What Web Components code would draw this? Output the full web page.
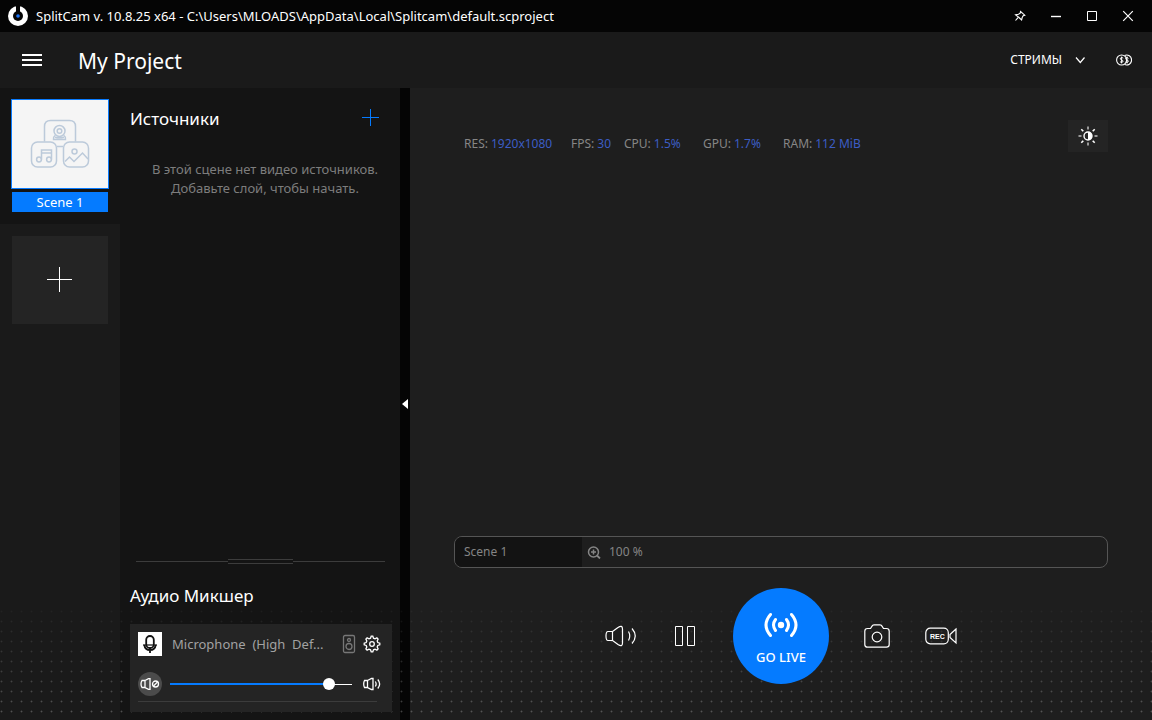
<!DOCTYPE html>
<html lang="ru">
<head>
<meta charset="utf-8">
<title>SplitCam</title>
<style>
html, body { margin: 0; height: 100%; background: #1e1e1e; }
body { font-family: "Noto Sans", "Open Sans", sans-serif; font-size: 13px; color: #fff; }
</style>
</head>
<body>
<split-app></split-app>
<script>
const BASE = `
*, *::before, *::after { box-sizing: border-box; }
button { font: inherit; color: inherit; background: none; border: 0; padding: 0; margin: 0; cursor: pointer; display: flex; align-items: center; justify-content: center; }
h1, h2, p { margin: 0; font-weight: 400; }
svg { display: block; flex: none; fill: none; stroke: currentColor; }
`;
function define(name, css, html) {
  const template = document.createElement('template');
  template.innerHTML = `<style>${BASE}${css}</style>${html}`;
  customElements.define(name, class extends HTMLElement {
    constructor() {
      super();
      this.attachShadow({ mode: 'open' }).append(template.content.cloneNode(true));
    }
  });
}

define('title-bar', `
:host { display: flex; align-items: center; height: 32px; padding: 0 6px 0 8px; background: #050505; }
h1 { flex: 1; margin-left: 8px; font-size: 13px; line-height: 20px; white-space: nowrap; }
button { width: 36px; height: 32px; }
`, `
<svg width="20" height="20" viewBox="0 0 20 20" stroke="none" style="stroke:none" aria-hidden="true"><circle cx="10" cy="10" r="10" fill="#fff"/><path d="M8 0h4v8h-4z" fill="#050505"/><circle cx="10" cy="10" r="5" fill="#050505"/><circle cx="10" cy="10" r="1.800" fill="#1d74f5"/></svg>
<h1><slot></slot></h1>
<button aria-label="Закрепить"><svg width="12" height="12" viewBox="0 0 12 12" stroke-width="1.1"><path d="M6.500 1.500L10.800 5.200L9.200 5.800L8.200 7.500L7.600 10L5 7.500L1.600 4.800L4.500 4.300L6.200 3.200ZM4 7.600L1.500 10.500"/></svg></button>
<button aria-label="Свернуть"><svg width="12" height="12" viewBox="0 0 12 12"><path d="M1 6.5h10" stroke-width="1.4"/></svg></button>
<button aria-label="Развернуть"><svg width="12" height="12" viewBox="0 0 12 12"><path d="M1.500 1.500h9v9h-9z"/></svg></button>
<button aria-label="Закрыть"><svg width="12" height="12" viewBox="0 0 12 12"><path d="M1.200 1.200l9.600 9.600M10.800 1.200l-9.600 9.600" stroke-width="1.2"/></svg></button>
`);

define('project-bar', `
:host { display: flex; align-items: center; height: 56px; padding: 0 20px 0 22px; background: #1a1a1a; }
h2 { flex: 1; margin-left: 36px; padding-top: 2px; font-size: 21px; line-height: 28px; }
.streams { gap: 12px; font-size: 12px; line-height: 16px; margin-right: 30px; }
`, `
<button aria-label="Меню"><svg width="20" height="14" viewBox="0 0 20 14" stroke-width="2"><path d="M0 2h20M0 7h20M0 12h20"/></svg></button>
<h2><slot></slot></h2>
<button class="streams">СТРИМЫ<svg width="12" height="12" viewBox="0 0 12 12" stroke-width="1.2"><path d="M2 3.500l4.300 5l4.200-5"/></svg></button>
<button aria-label="Донаты"><svg width="16" height="12" viewBox="0 0 16 12" stroke-width="1.1"><circle cx="5.600" cy="6" r="5"/><path d="M8.600 1.400A5 5 0 1 1 8.600 10.600"/><path d="M7.200 4.200C6.400 3.200 4.200 3.400 4.300 4.800C4.400 6.200 7 5.600 7 7.200C7 8.600 4.800 8.700 4 7.600M5.600 2.600v6.800M12.400 4.400C11.800 3.300 9.600 3.400 9.700 4.800C9.800 6.200 12.300 5.600 12.300 7.200C12.300 8.500 10.600 8.700 9.800 7.900M11 2.600v6.800" stroke-width="1"/></svg></button>
`);

define('scene-list', `
:host { display: block; }
.current { padding: 11px 11px 12px; background: #141414; }
.thumb { width: 100%; height: 90px; background: #f5f5f5; border: 1px solid #0a7cff; color: #bccada; }
.name { margin: 3px 1px 0; height: 20px; background: #057bff; text-align: center; font-size: 13px; line-height: 20px; }
.add { margin: 12px 12px 0; width: calc(100% - 24px); height: 88px; background: #242424; }
`, `
<div class="current">
<button class="thumb" aria-label="Scene 1"><svg width="60" height="50" viewBox="0 0 60 50" stroke-width="1.5"><path d="M14.500 22.500V7.500Q14.500 1.500 20.500 1.500H39.500Q45.500 1.500 45.500 7.500V22.500M27 27.500H33"/><rect x="1.500" y="23" width="25" height="25" rx="6"/><rect x="33.500" y="23" width="25" height="25" rx="6"/><circle cx="29.500" cy="12" r="5.500"/><circle cx="29.500" cy="12" r="2.300"/><path d="M25 16.500Q23 18 23.500 20.500H35.500Q36 18 34 16.500M25 18.200Q29.500 19.500 34 18.200"/><circle cx="9" cy="40.500" r="2.400"/><circle cx="19" cy="40.500" r="2.400"/><path d="M11.500 40.500V31H21.500V40.500M11.500 34H21.500"/><circle cx="44.500" cy="32.500" r="2.500"/><path d="M35 42.500L39.500 38L44 42.500L52.500 34L58 40"/></svg></button>
<div class="name">Scene 1</div>
</div>
<button class="add" aria-label="Добавить сцену"><svg width="26" height="26" viewBox="0 0 26 26"><path d="M12.500 0v25M0 12.500h25" stroke-width="1"/></svg></button>
`);

define('source-list', `
:host { display: block; flex: 1; padding: 16px 10px 0; }
header { display: flex; align-items: center; justify-content: space-between; height: 28px; padding-right: 11px; }
h2 { padding-top: 2px; font-size: 17px; line-height: 28px; }
.plus path { stroke: #057bff; }
p { margin: 28px 0 0; padding-left: 10px; text-align: center; font-size: 13px; line-height: 19px; color: #7d7d7d; }
`, `
<header><h2>Источники</h2><button class="plus" aria-label="Добавить источник"><svg width="18" height="18" viewBox="0 0 18 18"><path d="M9.500 0v17M1 8.500h17"/></svg></button></header>
<p>В этой сцене нет видео источников.<br>Добавьте слой, чтобы начать.</p>
`);

define('audio-mixer', `
:host { display: block; padding: 0 8px 8px 10px; }
.grip { display: flex; align-items: center; height: 5px; margin: 0 7px 0 6px; }
.grip::before, .grip::after { content: ""; flex: 1; height: 1px; background: #3c3c3c; }
.grip i { width: 65px; height: 5px; border: solid #3c3c3c; border-width: 1px 0; }
h2 { margin: 18px 0 14px; font-size: 17px; line-height: 28px; }
.card { background: #242424; height: 88px; padding: 8px; }
.row { display: flex; align-items: center; height: 24px; }
.row.level { margin-top: 16px; }
.mic { width: 24px; height: 24px; background: #fff; color: #111; display: grid; place-items: center; }
.label { flex: 1; margin-left: 10px; font-size: 13px; line-height: 20px; color: #a2a2a2; white-space: pre; }
.speaker { color: #777; margin-right: 7px; }
.gear { margin-right: 3px; }
.mute { width: 24px; height: 24px; border-radius: 50%; background: #4b4b4b; }
.vol { margin-right: 3px; }
input { appearance: none; flex: 1; min-width: 0; height: 12px; margin: 0 11px 0 8px; background: linear-gradient(#057bff, #057bff) 0 5px / 90% 2px no-repeat, linear-gradient(#fff, #fff) 0 6px / 100% 1px no-repeat; }
input::-webkit-slider-thumb { appearance: none; width: 12px; height: 12px; border-radius: 50%; background: #fff; }
hr { border: 0; height: 1px; background: #3c3c3c; margin: 5px 7px 0 0; }
`, `
<div class="grip"><i></i></div>
<h2>Аудио Микшер</h2>
<div class="card">
<div class="row">
<span class="mic"><svg width="16" height="20" viewBox="0 0 16 20"><rect x="4.200" y="2" width="7.600" height="12" rx="3.800" stroke-width="1.800"/><path d="M1 11h14" stroke-width="1.200"/><path d="M2.300 11C2.800 14.500 5 16 8 16S13.200 14.500 13.700 11M8 14v5" stroke-width="1.800"/></svg></span>
<label class="label" for="level">Microphone  (High  Def...</label>
<button class="speaker" aria-label="Мониторинг"><svg width="14" height="20" viewBox="0 0 14 20" stroke-width="1.300"><rect x="1.500" y="1.500" width="11" height="17" rx="1.500"/><circle cx="7" cy="6" r="1.500"/><circle cx="7" cy="12.500" r="3"/></svg></button>
<button class="gear" aria-label="Настройки"><svg width="18" height="18" viewBox="0 0 18 18" stroke-width="1.300"><path d="M7.500 3.200L8.200 1.200H9.800L10.500 3.200L12 3.800L13.900 2.900L15.100 4.100L14.200 6L14.800 7.500L16.800 8.200V9.800L14.800 10.500L14.200 12L15.100 13.900L13.900 15.100L12 14.200L10.500 14.800L9.800 16.800H8.200L7.500 14.800L6 14.200L4.100 15.100L2.900 13.900L3.800 12L3.200 10.500L1.200 9.800V8.200L3.200 7.500L3.800 6L2.900 4.100L4.100 2.900L6 3.800Z"/><circle cx="9" cy="9" r="2.300"/></svg></button>
</div>
<div class="row level">
<button class="mute" aria-label="Без звука"><svg width="20" height="14" viewBox="0 0 20 14" stroke-width="1.300"><path d="M5 3.500H2Q1 5 1 7T2 10.500H5M5 3.500V10.500L8.500 12.300H10V1.700H8.500L5 3.500"/><circle cx="15.500" cy="7" r="3"/><path d="M13.500 9l4-4"/></svg></button>
<input id="level" type="range" min="0" max="100" value="90">
<button class="vol" aria-label="Громкость"><svg width="18" height="14" viewBox="0 0 18 14" stroke-width="1.300"><path d="M4.500 3.500H1.500Q.7 5 .7 7T1.500 10.500H4.500M4.500 3.500V10.500L8.500 12.500H10V1.500H8.500L4.500 3.500M12.300 4.500Q14 7 12.300 9.500M14.800 2.500Q18.500 7 14.800 11.500"/></svg></button>
</div>
<hr>
</div>
`);

define('panel-divider', `
:host { display: grid; place-items: center; }
button { width: 10px; height: 32px; }
svg { fill: #fff; stroke: none; }
`, `<button aria-label="Свернуть панель"><svg width="6" height="10" viewBox="0 0 6 10"><path d="M6 0v10L0 5z"/></svg></button>`);

define('stage-stats', `
:host { display: flex; align-items: flex-start; justify-content: space-between; }
dl { display: grid; grid-template-columns: 107px 53px 79px 80px auto; margin: 16px 0 0 10px; font-size: 12px; line-height: 16px; color: #868686; white-space: nowrap; }
dl div { display: flex; gap: 3px; }
dd { margin: 0; color: #3c5dc4; }
button { width: 40px; height: 32px; background: #242424; }
`, `
<dl>
<div><dt>RES:</dt><dd>1920x1080</dd></div>
<div><dt>FPS:</dt><dd>30</dd></div>
<div><dt>CPU:</dt><dd>1.5%</dd></div>
<div><dt>GPU:</dt><dd>1.7%</dd></div>
<div><dt>RAM:</dt><dd>112 MiB</dd></div>
</dl>
<button aria-label="Яркость"><svg width="20" height="20" viewBox="0 0 20 20"><circle cx="10" cy="10" r="4" stroke-width="1.400"/><path d="M10 6a4 4 0 0 1 0 8z" fill="#fff" stroke="none"/><path d="M10 .5v3M10 16.500v3M.5 10h3M16.500 10h3" stroke="#999" stroke-width="2"/><path d="M3.300 3.300l2 2M14.700 14.700l2 2M3.300 16.700l2-2M14.700 5.300l2-2" stroke-width="1.600"/></svg></button>
`);

define('scene-bar', `
:host { display: flex; align-items: stretch; height: 32px; border: 1px solid #555; border-radius: 8px; overflow: hidden; font-size: 12px; line-height: 30px; color: #858585; }
.name { width: 127px; padding-left: 9px; background: #131313; }
.zoom { gap: 8px; padding-left: 5px; }
`, `
<div class="name">Scene 1</div>
<button class="zoom"><svg width="14" height="14" viewBox="0 0 14 14" stroke-width="1.500"><circle cx="6.500" cy="7" r="5"/><path d="M6.500 4.500v5M4 7h5"/><path d="M10 10.500l3 3" stroke-width="1.800"/></svg>100 %</button>
`);

define('stage-controls', `
:host { display: flex; align-items: center; justify-content: center; gap: 32px; }
button { width: 32px; height: 32px; }
.live { flex-direction: column; width: 96px; height: 96px; border-radius: 50%; background: #057bff; font-size: 13px; line-height: 18px; font-weight: 500; }
.live svg { margin: 5px 0 10px; }
text { font: 700 7px "Liberation Sans", sans-serif; fill: #fff; stroke: none; }
`, `
<button aria-label="Громкость"><svg width="32" height="24" viewBox="0 0 32 24" stroke-width="1.200"><path d="M7.500 7.500H3Q1 7.500 1 12T3 16.500H7.500M7.500 7.500V16.500L13 20.500Q17.500 23.500 17.500 19V5Q17.500 .5 13 3.500L7.500 7.500M23.500 7.500Q26 12 23.500 16.500M27 4.500Q33.500 12 27 19.500"/></svg></button>
<button aria-label="Пауза"><svg width="20" height="20" viewBox="0 0 20 20"><path d="M.5 .5h7v19h-7zM12.500 .5h7v19h-7z" stroke-width="1"/></svg></button>
<button class="live"><svg width="36" height="26" viewBox="0 0 36 26" stroke-width="3" stroke-linecap="round"><circle cx="18" cy="13" r="3.200" fill="#fff" stroke="none"/><path d="M12.500 7.500Q8.500 13 12.500 18.500M23.500 7.500Q27.500 13 23.500 18.500M7.500 2.500Q-1.500 13 7.500 23.500M28.500 2.500Q37.500 13 28.500 23.500"/></svg>GO LIVE</button>
<button aria-label="Снимок"><svg width="26" height="24" viewBox="0 0 26 24" stroke-width="1.200"><path d="M3.500 4.500H6.500L8 2.200Q8.500.8 10 .8H16Q17.500.8 18 2.200L19.500 4.500H22.500Q25.200 4.500 25.200 7.200V20.500Q25.200 23.200 22.500 23.200H3.500Q.8 23.200.8 20.500V7.200Q.8 4.500 3.500 4.500Z"/><circle cx="13" cy="13" r="4.800"/></svg></button>
<button aria-label="Запись"><svg width="32" height="18" viewBox="0 0 32 18" stroke-width="1.200"><rect x=".8" y="1.200" width="22.500" height="15.600" rx="4.500"/><path d="M31 2L25 7.500V10.500L31 16Z"/><text x="5" y="12">REC</text></svg></button>
`);

define('live-stage', `
:host { display: flex; flex-direction: column; padding: 32px 44px 36px; min-width: 0; }
.view { flex: 1; }
scene-bar { margin-bottom: 20px; }
`, `<stage-stats></stage-stats><div class="view"></div><scene-bar></scene-bar><stage-controls></stage-controls>`);

define('split-app', `
:host { display: flex; flex-direction: column; min-height: 100vh; }
main { position: relative; flex: 1; display: grid; grid-template-columns: 120px 280px 10px 1fr; background: linear-gradient(90deg, #1a1a1a 120px, #141414 120px 400px, #050505 400px 410px, #1e1e1e 410px); }
.dots { position: absolute; inset: auto 0 0 0; height: 110px; pointer-events: none; mask-image: linear-gradient(rgb(0 0 0 / .15), #000); }
.dots svg { width: 100%; height: 100%; }
.side { display: flex; flex-direction: column; }
scene-list, .side, panel-divider, live-stage { position: relative; }
`, `
<title-bar>SplitCam v. 10.8.25 x64 - C:\\Users\\MLOADS\\AppData\\Local\\Splitcam\\default.scproject</title-bar>
<project-bar>My Project</project-bar>
<main>
<div class="dots"><svg aria-hidden="true"><defs><pattern id="grid" width="10" height="10" patternUnits="userSpaceOnUse"><path d="M1 1h1v1h-1z" fill="#fff" fill-opacity=".26" stroke="none"/><path d="M0 1h1v1h-1zM2 1h1v1h-1zM1 0h1v1h-1zM1 2h1v1h-1z" fill="#fff" fill-opacity=".1" stroke="none"/></pattern></defs><rect width="100%" height="100%" fill="url(#grid)" stroke="none"/></svg></div>
<scene-list></scene-list>
<div class="side"><source-list></source-list><audio-mixer></audio-mixer></div>
<panel-divider></panel-divider>
<live-stage></live-stage>
</main>
`);
</script>
</body>
</html>
